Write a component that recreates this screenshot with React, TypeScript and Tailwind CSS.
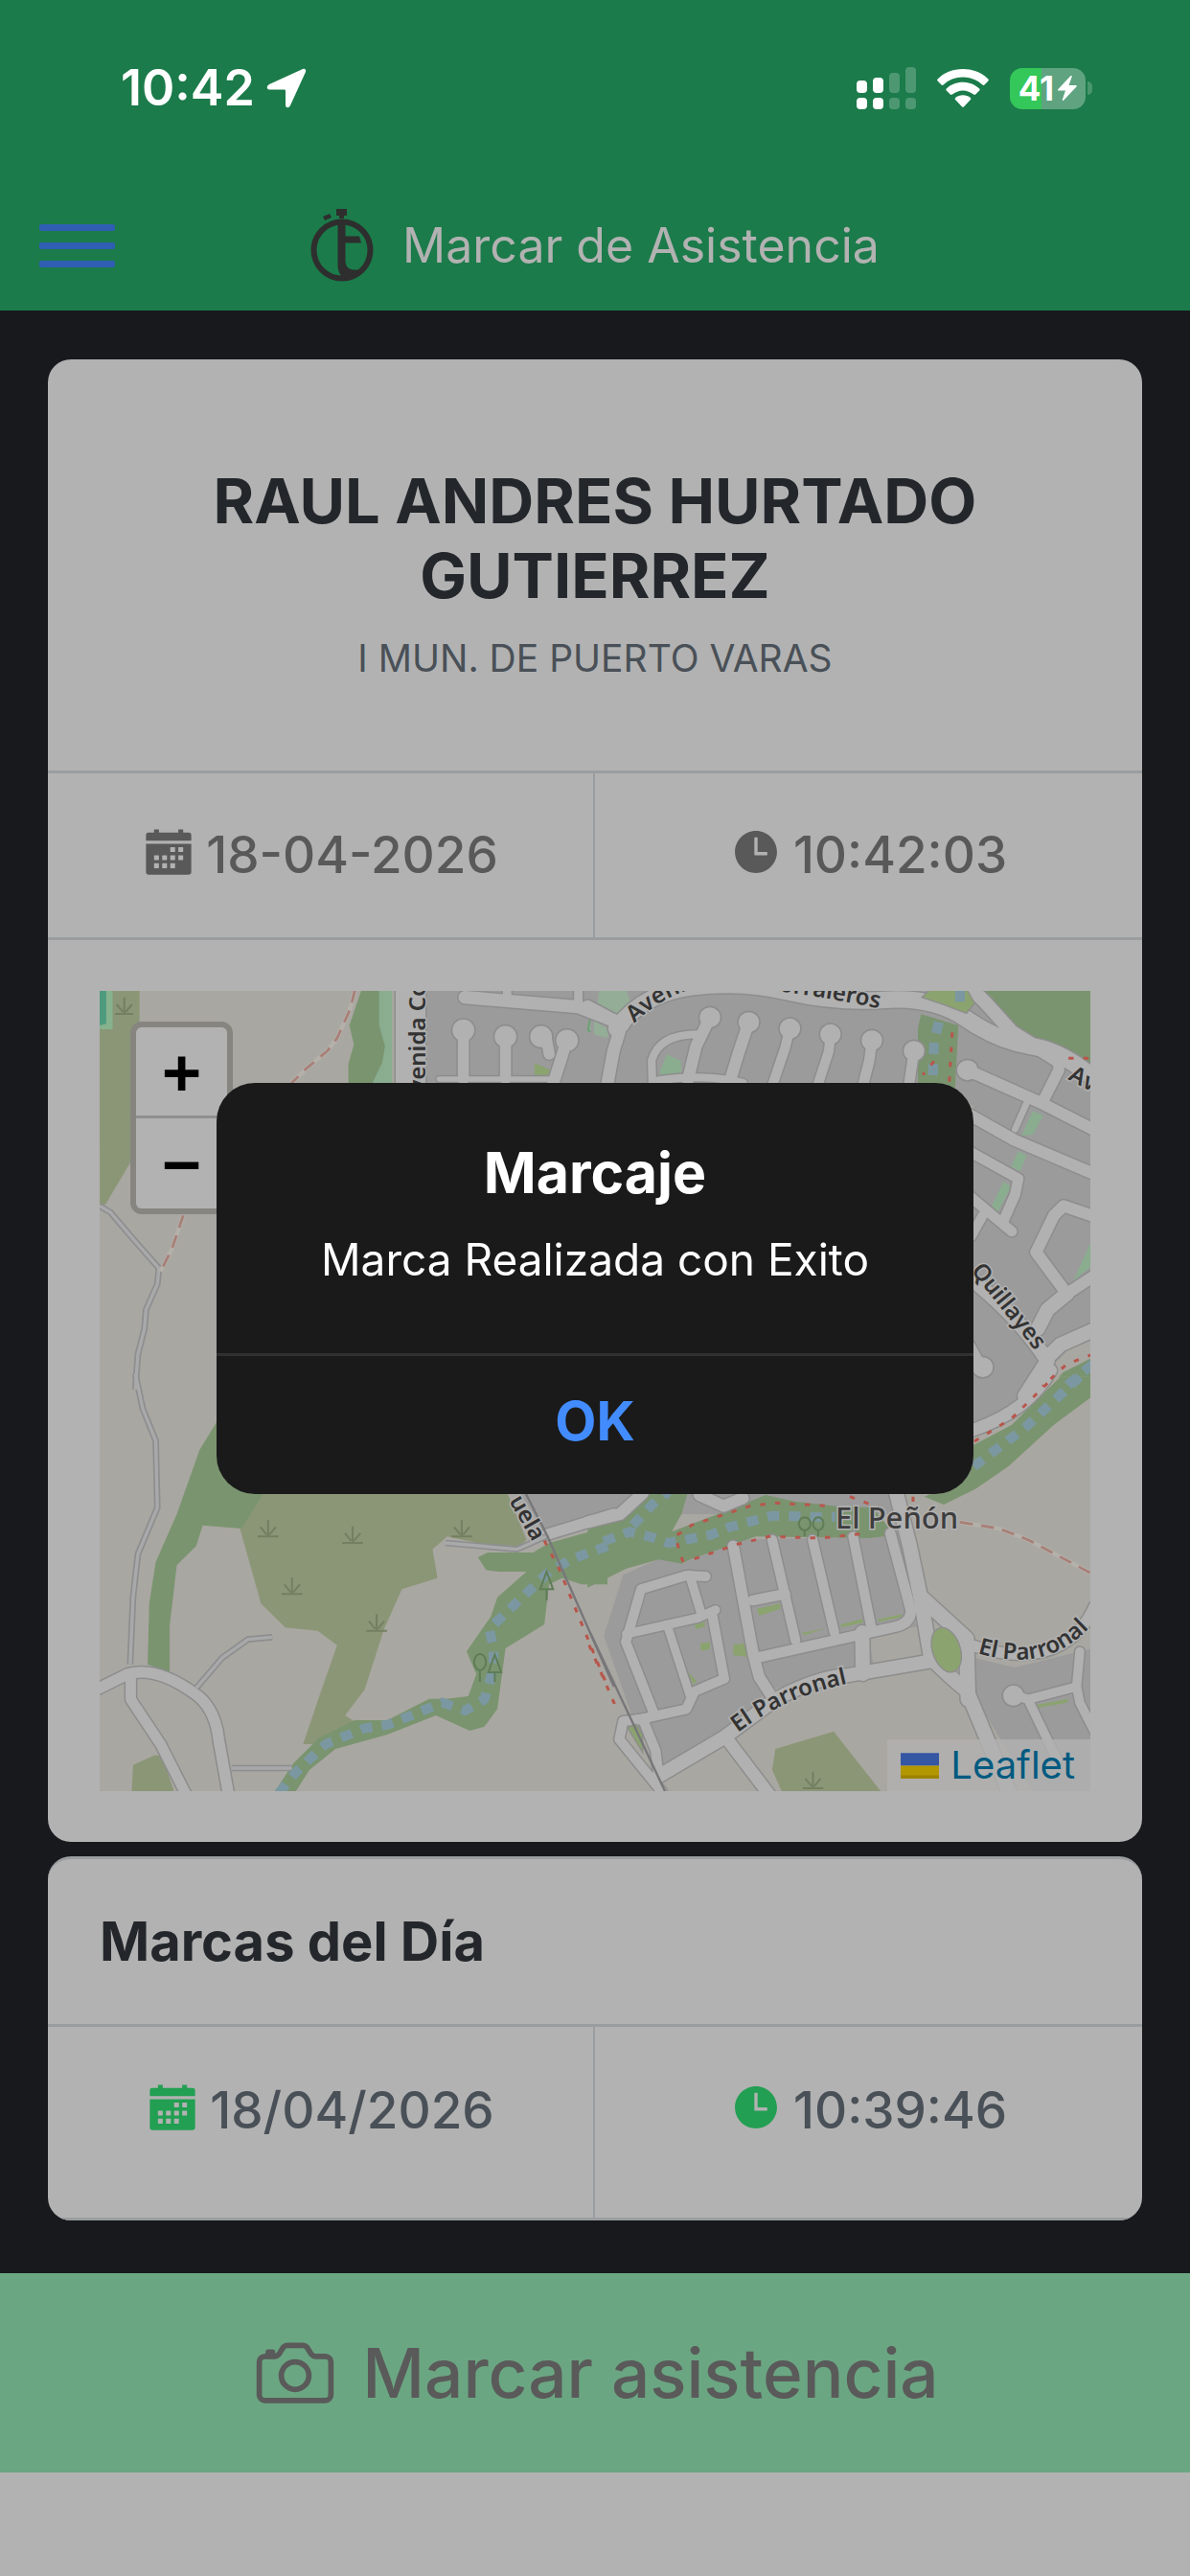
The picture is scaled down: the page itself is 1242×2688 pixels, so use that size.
import React from 'react';
import { IoCalendarSharp, IoCameraOutline, IoTimeSharp } from 'react-icons/io5';

type Road = { d: string; w: number };

// The map is drawn in four quadrants, each with its own local coordinates.
const TL = 'translate(-4 -14) scale(.338 .3333)';
const TR = 'translate(516 -14) scale(.338 .3333)';
const BL = 'translate(-4 406) scale(.338 .3333)';
const BR = 'translate(516 406) scale(.338 .3333)';

const roadsTL: Road[] = [
  { d: 'M972 20V340', w: 92 },
  { d: 'M1140 62L1490 92L1600 135', w: 40 },
  { d: 'M1270 30V70M1490 30V90', w: 26 },
  { d: 'M1135 165V318M1265 185V318M1390 185L1400 240', w: 34 },
  { d: 'M1455 195L1435 260L1410 340', w: 36 },
  { d: 'M1060 318H1400', w: 16 },
];

const roadsTR: Road[] = [
  { d: 'M-20 90L90 150M90 130L60 230L40 340', w: 38 },
  { d: 'M70 160Q150 50 300 30T600 45T900 70T1150 130T1350 215T1560 330', w: 52 },
  { d: 'M1150 20L1210 80L1290 170L1440 265', w: 42 },
  { d: 'M358 125L315 215L290 320M478 140L445 240L415 340', w: 36 },
  { d: 'M605 160L590 220L550 340M730 178L725 230L690 340', w: 30 },
  { d: 'M858 197L850 260L830 340M988 230L972 340', w: 32 },
  { d: 'M180 330L178 260Q200 178 320 178M200 322Q340 300 460 330', w: 24 },
  { d: 'M1153 290L1375 390L1550 480M1160 430L1300 510L1560 622', w: 36 },
  { d: 'M1385 390L1435 290V250', w: 34 },
  { d: 'M1300 475L1335 395', w: 20 },
  { d: 'M1160 545L1310 630L1300 680L1265 760M1160 685L1290 795', w: 32 },
  { d: 'M1550 750L1450 715L1420 745L1365 860L1460 990L1550 930', w: 36 },
  { d: 'M1160 940Q1310 1060 1400 1200L1330 1310M1400 1190L1440 1150L1550 1100M1460 990L1400 1040L1370 1100', w: 44 },
  { d: 'M1200 745L1165 810M1160 1150L1195 1215', w: 30 },
];

const roadsBL: Road[] = [
  { d: 'M-10 975L100 920Q190 895 310 985Q370 1030 380 1130L412 1310', w: 34 },
  { d: 'M108 920V1000L200 1140L285 1310', w: 32 },
  { d: 'M1390 485L1600 420', w: 34 },
];

const roadsBR: Road[] = [
  { d: 'M430 520L492 860L510 930L545 985', w: 34 },
  { d: 'M550 500L622 815M675 500L742 790M800 490L857 780', w: 30 },
  { d: 'M915 480L978 720Q980 765 920 775L500 870M490 690L590 670', w: 32 },
  { d: 'M828 790L830 920', w: 44 },
  { d: 'M200 1240L400 1120L560 1000Q690 930 780 925L1040 880', w: 42 },
  { d: 'M930 340L975 520L1008 680L1040 870Q1120 950 1150 970L1290 1310', w: 44 },
  { d: 'M1010 680L1150 810L1155 1000', w: 46 },
  { d: 'M415 1130L550 1310', w: 38 },
  { d: 'M345 615L285 612L145 655L98 820L185 1045', w: 30 },
  { d: 'M100 795L320 745L375 720M295 610L332 735', w: 28 },
  { d: 'M365 735L402 935L310 975L285 1030L130 1065', w: 30 },
  { d: 'M225 765L295 985', w: 26 },
  { d: 'M150 1060L190 1160L200 1240M140 1062L90 1068L78 1125L210 1290', w: 30 },
  { d: 'M-20 445L80 420L150 355M325 360L400 395L460 370', w: 36 },
  { d: 'M1410 -30Q1340 100 1160 160', w: 38 },
  { d: 'M1150 825Q1330 890 1440 830Q1510 790 1545 710', w: 34 },
  { d: 'M1295 985L1340 1000L1490 960L1500 1010L1560 1130M1340 1000L1430 1190M1490 960L1500 850', w: 28 },
];

const heads = [
  { t: TL, r: 36, at: [[1135, 165], [1265, 185], [1375, 185], [1455, 197]] },
  {
    t: TR,
    r: 34,
    at: [[358, 125], [478, 140], [605, 160], [730, 178], [858, 197], [988, 230], [1153, 290], [1200, 1220]],
  },
  { t: BR, r: 34, at: [[1295, 988]] },
];

const roadGroups = [
  { t: TL, roads: roadsTL },
  { t: TR, roads: roadsTR },
  { t: BL, roads: roadsBL },
  { t: BR, roads: roadsBR },
];

function Roads() {
  return (
    <g fill="none" strokeLinecap="round" strokeLinejoin="round">
      {roadGroups.map(({ t, roads }) => (
        <g key={t} transform={t} stroke="#8d8d8d">
          {roads.map((r) => (
            <path key={r.d} d={r.d} strokeWidth={r.w + 9} />
          ))}
        </g>
      ))}
      {heads.map(({ t, r, at }) => (
        <g key={t} transform={t} fill="#b1b1b1" stroke="#8d8d8d" strokeWidth="5">
          {at.map(([x, y]) => (
            <circle key={x} cx={x} cy={y} r={r} />
          ))}
        </g>
      ))}
      {roadGroups.map(({ t, roads }) => (
        <g key={t} transform={t} stroke="#b1b1b1">
          {roads.map((r) => (
            <path key={r.d} d={r.d} strokeWidth={r.w} />
          ))}
        </g>
      ))}
    </g>
  );
}

function StreetMap() {
  return (
    <svg viewBox="0 0 1034 835" preserveAspectRatio="xMidYMid slice" className="block w-full" role="img" aria-label="Mapa">
      <rect width="1034" height="835" fill="#a9a7a1" />

      {/* land use */}
      <g transform={TL}>
        <path fill="#8b9677" d="M12 40H135V530L30 710L12 715Z" />
        <path fill="#86b28d" d="M12 40H52V162H12Z" />
        <path fill="#4d9a7e" d="M12 40H32V145L12 150Z" />
        <path fill="#8aad90" d="M870 40H915V340H840Z" />
        <path fill="#7a946f" d="M820 40H875V150L893 215L885 265L850 340H780V270L797 210L783 150Z" />
        <path fill="#9b9b9b" d="M925 30H1580V400H925Z" />
        <path fill="#8ba36f" d="M1355 268L1405 290L1385 318H1355ZM1150 306H1240V314H1150Z" />
        <path fill="#94ad96" stroke="#6da077" strokeWidth="6" d="M1525 135L1580 150V195L1520 165ZM1550 40H1580V100H1560Z" />
      </g>
      <g transform={TR}>
        <path fill="#9b9b9b" d="M-10 30H1540V1300H1170V400H-10Z" />
        <path fill="#7a946f" d="M1205 40H1540V290L1450 250L1350 200L1270 130Z" />
        <path fill="#94ad96" d="M15 40H100L115 85L60 122L10 85ZM0 135L50 165L40 190L0 178Z" />
        <path fill="#7a946f" d="M1010 115L1125 150L1115 345H1000V160Z" />
        <path fill="#8aad90" d="M225 240L268 262L270 312L205 315V290ZM1355 418L1387 432L1355 492L1320 495ZM1310 543L1336 558L1315 607L1288 592ZM1265 640L1288 655L1247 732L1225 720ZM1540 815V900L1480 950Z" />
        <path fill="#a9a7a1" d="M1540 1130L1470 1160L1400 1230L1350 1300H1540Z" />
        <path fill="#7a946f" d="M1540 1190L1450 1235L1385 1300H1540Z" />
      </g>
      <g transform={BL}>
        <path
          fill="#8b9677"
          d="M500 340H1265L1330 500L1310 520L1200 515L1085 490L1040 530L1055 620L945 655L890 780L830 970L770 1050L800 1070L700 1140H640L690 990L745 830L685 785L585 775L510 700L445 465ZM115 1205L180 1175H205L245 1300H110Z"
        />
        <path fill="#9b9b9b" d="M1300 340H1580V440L1390 480Z" />
        <path
          fill="#7a946f"
          d="M380 120L320 220L250 420L185 570L165 700L160 890L228 915V770L250 580L310 520L330 455L450 465L520 350ZM1180 555L1210 540H1350L1400 510L1580 460V640H1500L1440 620L1400 640L1385 765L1265 840L1240 1030L1200 1085L1155 1098L1050 1050L900 1110L740 1155L660 1220L610 1300H545L610 1200L690 1120L800 1065H900L1030 998H1080L1150 990L1175 920L1145 850L1220 740L1240 680L1330 600H1245L1205 595Z"
        />
      </g>
      <g transform={BR}>
        <path
          fill="#9b9b9b"
          d="M90 610L200 560L270 575L430 500L900 490L950 700L1000 770V870L860 900L540 970L420 1100L210 1230L120 1060L30 800ZM-20 340H140L90 430L-20 450ZM250 340H950V420H250ZM1175 870L1300 900L1540 840V1300H1360L1180 1000ZM1170 -20H1390L1300 90L1170 150Z"
        />
        <path fill="#a9a7a1" d="M845 810L1000 770L1005 860L865 895ZM1385 -10H1540V20L1400 120Z" />
        <path
          fill="#7a946f"
          d="M-20 465L100 420L180 350H290L270 420L240 475L420 405L530 360L620 380L750 395L860 400L930 485L850 495L500 490L300 560L270 575L200 562L100 590L-20 650ZM1440 -10H1540V50L1420 140L1280 270L1180 340L1080 390L1020 365L1100 330L1160 210L1290 140Z"
        />
        <path fill="#8b9677" d="M560 1155L740 1100L895 1300H585L550 1220Z" />
        <path
          fill="#8ba36f"
          d="M430 828L475 824V866L430 862ZM503 716L575 700V716L510 738ZM640 792L720 776L650 798ZM760 766L830 748V760L765 774ZM875 750L950 733V742L880 757ZM1362 1018L1465 998L1460 1010L1370 1026ZM310 766L342 758V772L315 780ZM328 826L358 820V842L330 848ZM290 912L318 945L305 952Z"
        />
      </g>

      <Roads />

      {/* parks that sit inside the roads */}
      <g fill="#8ba36f" stroke="#8d8d8d" strokeWidth="4">
        <path transform={TR} d="M1012 62L1040 35H1150L1175 80L1150 112L1080 85Z" />
        <ellipse transform={`${BR} rotate(-18 1088 845)`} cx="1088" cy="845" rx="43" ry="72" />
        <path transform={BR} d="M103 1088L130 1078L150 1110V1165Z" />
      </g>

      {/* unpaved tracks */}
      <g fill="none" stroke="#8d8e90" strokeWidth="20" strokeLinejoin="round">
        <path transform={TL} d="M12 715L45 735L125 830L195 910L190 960L155 1040L150 1100L130 1180L122 1290" />
        <path transform={BL} d="M122 -20L145 90L185 190L190 400L130 545L115 680L106 890M310 965L390 870L470 812L545 805M420 1215H605M1080 510L1300 530L1390 490" />
      </g>
      <g fill="none" stroke="#a9a9aa" strokeWidth="10" strokeLinejoin="round">
        <path transform={TL} d="M12 715L45 735L125 830L195 910L190 960L155 1040L150 1100L130 1180L122 1290" />
        <path transform={BL} d="M122 -20L145 90L185 190L190 400L130 545L115 680L106 890M310 965L390 870L470 812L545 805M420 1215H605M1080 510L1300 530L1390 490" />
      </g>

      {/* streams */}
      <g fill="none" stroke="#7b98a2" strokeWidth="30" strokeDasharray="36 30">
        <path transform={TR} d="M1130 40V90M1065 140L1050 200L1045 345M1540 1210L1470 1270L1440 1300" />
        <path transform={BL} d="M1580 520L1470 560L1400 600L1260 735L1215 780L1228 840V900L1200 1000L1140 1035L1070 1010L1010 1035L900 1080L830 1090L710 1140L620 1225L560 1300" />
        <path transform={BR} d="M30 505L110 475L170 490L230 510L360 485L420 460L550 425L680 428H745M120 455L180 390L230 350M1500 -10L1330 150L1160 280" />
      </g>

      {/* foot paths */}
      <g fill="none" stroke="#b4b0aa" strokeWidth="13">
        <path transform={TL} d="M800 40L785 100L745 190L715 230L650 285L600 335M270 745L235 850L200 920" />
        <path transform={BR} d="M1130 445L1250 465L1340 500L1540 608" />
      </g>
      <g fill="none" stroke="#a87f77" strokeWidth="8" strokeDasharray="40 26">
        <path transform={TL} d="M800 40L785 100L745 190L715 230L650 285L600 335M270 745L235 850L200 920" />
        <path transform={BR} d="M1130 445L1250 465L1340 500L1540 608" />
      </g>
      <g fill="none" stroke="#b8564c" strokeWidth="9" strokeDasharray="16 30">
        <path transform={TR} d="M1106 172L1096 345M1050 262L1015 305M1465 253H1540M1540 1180L1460 1210L1385 1280" />
        <path transform={BL} d="M1385 503L1430 590L1580 960" />
        <path transform={BR} d="M275 570L250 490L300 455L480 395L560 385L740 395M790 365L880 400M310 560L440 515L540 490L700 495L840 480M1400 10L1350 60L1290 120L1170 195M-15 830L70 1030M985 365V400" />
      </g>

      {/* railway */}
      <g fill="none" stroke="#77777a" strokeWidth="7">
        <path transform={BL} d="M1325 350L1395 490L1600 960" />
        <path transform={BR} d="M-10 795L225 1300" />
      </g>

      {/* vegetation marks */}
      <g fill="none" stroke="#747f62" strokeWidth="6">
        {[[532, 490], [793, 510], [606, 670], [867, 785], [1130, 490]].map(([x, y]) => (
          <path key={x} transform={BL} d={`M${x - 32} ${y}H${x + 32}M${x} ${y}V${y - 52}M${x - 4} ${y - 6}L${x - 24} ${y - 30}M${x + 4} ${y - 6}L${x + 24} ${y - 30}`} />
        ))}
        <path transform={BR} d="M645 1278H708M676 1278V1226M672 1272L652 1248M680 1272L700 1248" />
        <path transform={TL} d="M60 114H115M88 114V62M84 108L64 84M92 108L112 84" />
        <g stroke="#5f7d57">
          <path transform={BL} d="M1186 945V908M1186 908A18 25 0 1 1 1187 908M1232 945V915H1212L1232 860L1252 915H1232M1392 690V655H1372L1392 600L1412 655H1392" />
          <path transform={BR} d="M650 490V470A18 20 0 1 1 651 470M692 490V470A16 20 0 1 1 693 470" />
        </g>
      </g>

      {/* labels */}
      <g className="font-['Noto_Sans','Open_Sans',sans-serif]" fill="#333" stroke="#b1b1b1" strokeWidth="3" paintOrder="stroke" fontSize="24" fontWeight="600">
        <path id="corraleros" fill="none" stroke="none" d="M558 34Q612 -18 680 -3Q750 4 830 22" />
        <path id="parronal" fill="none" stroke="none" d="M666 774Q720 733 795 720" />
        <path id="parronal-este" fill="none" stroke="none" d="M916 691Q960 704 992 692Q1028 680 1060 630" />
        <text transform="translate(340 122) rotate(-90)">Avenida Co</text>
        <text>
          <textPath href="#corraleros">Avenida Los Corraleros</textPath>
        </text>
        <text>
          <textPath href="#parronal">El Parronal</textPath>
        </text>
        <text>
          <textPath href="#parronal-este">El Parronal</textPath>
        </text>
        <text transform="translate(909 292) rotate(51)">Quillayes</text>
        <text transform="translate(1010 92) rotate(28)">Avenida</text>
        <text transform="translate(427 532) rotate(60)">uela</text>
        <text x="768" y="561" fontSize="31" fontWeight="500" fill="#3d3d3d">
          El Peñón
        </text>
      </g>
    </svg>
  );
}

function StatusBar() {
  return (
    <div className="flex items-center justify-between pt-[70px] pr-[102px] pl-[126px] text-white">
      <div className="flex h-11 items-center gap-3">
        <span className="text-[52px] font-semibold">10:42</span>
        <svg viewBox="0 0 42 42" className="h-[42px] w-[42px]" fill="currentColor">
          <path d="M38 1L3 17C0 18.500 0 22 3 22.500H18.500C19.500 22.500 20 23 20 24V39C20.500 42 23.500 42 25 39L41 4C42 2 40 0 38 1Z" />
        </svg>
      </div>
      <div className="flex h-11 items-center gap-[22px]">
        <svg viewBox="0 0 62 44" className="h-11 w-[62px]" fill="currentColor">
          <rect x="0" y="14" width="11" height="13" rx="4" />
          <rect x="17" y="11" width="11" height="16" rx="4" />
          <g opacity=".22">
            <rect x="34" y="6" width="11" height="21" rx="4" />
            <rect x="51" y="0" width="11" height="27" rx="4" />
            <rect x="34" y="32" width="11" height="12" rx="4" />
            <rect x="51" y="32" width="11" height="12" rx="4" />
          </g>
          <rect x="0" y="32" width="11" height="12" rx="4" />
          <rect x="17" y="32" width="11" height="12" rx="4" />
        </svg>
        <svg viewBox="0 0 54 40" className="h-10 w-[54px]" fill="currentColor">
          <path d="M27 0C16.500 0 7 4 .6 10.500C0 11 0 12 .6 12.600L4.500 16.600C5 17.200 6 17.200 6.600 16.600C12 11.500 19 8.600 27 8.600S42 11.500 47.400 16.600C48 17.200 49 17.200 49.500 16.600L53.400 12.600C54 12 54 11 53.400 10.500C47 4 37.500 0 27 0Z" />
          <path d="M27 13.800C20.500 13.800 14.300 16.200 9.800 20.500C9.200 21 9.200 22 9.800 22.600L13.800 26.600C14.400 27.200 15.200 27.200 15.900 26.600C19 24 22.800 22.400 27 22.400S35 24 38.100 26.600C38.800 27.200 39.600 27.200 40.200 26.600L44.200 22.600C44.800 22 44.800 21 44.200 20.500C39.700 16.200 33.500 13.800 27 13.800Z" />
          <path d="M27 27.300C24 27.300 21.300 28.300 19.200 30C18.500 30.600 18.500 31.500 19.100 32.100L25.900 39.200C26.500 39.900 27.500 39.900 28.100 39.200L34.900 32.100C35.500 31.500 35.500 30.600 34.800 30C32.700 28.300 30 27.300 27 27.300Z" />
        </svg>
        <div className="flex items-center gap-[2px]">
          <div className="flex h-[43px] w-[79px] items-center justify-center gap-1 rounded-[13px] bg-[linear-gradient(90deg,#34c759_42%,#5fa380_42%)]">
            <span className="text-[35px] font-bold">41</span>
            <svg viewBox="0 0 20 26" className="h-[26px] w-5" fill="currentColor">
              <path d="M13.500 0L0 14.500C-.3 15 0 15.500 .5 15.500H8L4.800 25C4.700 26 5.500 26.300 6 25.700L19.700 11.200C20 10.700 19.800 10 19.200 10H11.600L14.700 1C15 0 14.200-.5 13.500 0Z" />
            </svg>
          </div>
          <div className="h-[14px] w-[5px] rounded-r-full bg-[#49966d]" />
        </div>
      </div>
    </div>
  );
}

function StopwatchLogo() {
  return (
    <svg viewBox="0 0 66 76" className="h-[76px] w-[66px]" fill="#2e2e2e">
      <circle cx="33" cy="43" r="29.500" fill="none" stroke="#2e2e2e" strokeWidth="6" />
      <path d="M27 0H38V7H35V10H30V7H27Z" />
      <path d="M13 8L20 5L22 9L15 12Z" />
      <path d="M28.500 12H36.500V28.500H51L53 35.500H36.500V54C36.500 60 40 63.500 45 63.500H53L40 73L33 70.500C30 68 28.500 64 28.500 58Z" />
    </svg>
  );
}

function Header() {
  return (
    <header className="bg-[#1b7b4a]">
      <StatusBar />
      <div className="mt-[74px] grid h-[136px] grid-cols-[1fr_auto_1fr] items-center">
        <button type="button" aria-label="Abrir menú" className="ml-[41px] flex w-[79px] flex-col gap-3">
          <span className="h-[7px] w-full rounded-[2px] bg-[#2f5eb2]" />
          <span className="h-[7px] w-full rounded-[2px] bg-[#2f5eb2]" />
          <span className="h-[7px] w-full rounded-[2px] bg-[#2f5eb2]" />
        </button>
        <div className="flex items-center gap-[30px] text-[#b2b2b2]">
          <StopwatchLogo />
          <h1 className="text-[50px]">Marcar de Asistencia</h1>
        </div>
      </div>
    </header>
  );
}

type DateTimeProps = { date: string; time: string; iconClass: string; className: string };

function DateTimeRow({ date, time, iconClass, className }: DateTimeProps) {
  return (
    <div className={`grid grid-cols-2 border-b-[3px] border-[#999da0] text-[53px] font-medium ${className}`}>
      <div className="flex items-center justify-center gap-3 border-r-2 border-[#999da0]">
        <IoCalendarSharp className={`mb-2 h-[54px] w-[54px] ${iconClass}`} />
        <span>{date}</span>
      </div>
      <div className="flex items-center justify-center gap-3">
        <IoTimeSharp className={`mb-2 h-[54px] w-[54px] ${iconClass}`} />
        <span>{time}</span>
      </div>
    </div>
  );
}

function MapView() {
  return (
    <div className="relative mx-[54px] my-[53px] overflow-hidden">
      <StreetMap />
      <div className="absolute top-8 left-8 w-[107px] overflow-hidden rounded-xl border-[6px] border-[#868580] font-['DejaVu_Sans_Mono',monospace] text-[66px] font-bold text-black">
        <button type="button" aria-label="Acercar" className="flex h-[95px] w-full items-center justify-center border-b-[3px] border-[#8f8f8f] bg-[#b2b2b2]">
          +
        </button>
        <button type="button" aria-label="Alejar" className="flex h-[94px] w-full items-center justify-center bg-[#b2b2b2]">
          −
        </button>
      </div>
      <a href="#leaflet" className="absolute right-0 bottom-0 flex h-[54px] items-center gap-3 bg-[#b2b2b2]/80 pr-4 pl-[14px] text-[40px] text-[#005a80]">
        <svg viewBox="0 0 12 8" className="h-[27px] w-10">
          <path fill="#3556a3" d="M0 0h12v4H0z" />
          <path fill="#b39700" d="M0 4h12v4H0z" />
          <path fill="#9c8200" d="M0 7h12v1H0z" />
        </svg>
        Leaflet
      </a>
    </div>
  );
}

function Dialog() {
  return (
    <div className="fixed inset-0 flex items-center justify-center">
      <div role="alertdialog" aria-labelledby="dialog-title" className="w-[790px] overflow-hidden rounded-[40px] bg-[#1a1a1a] text-center text-white">
        <div className="px-12 pt-14 pb-[68px]">
          <h2 id="dialog-title" className="text-[59px] leading-[76px] font-bold">
            Marcaje
          </h2>
          <p className="mt-[22px] text-[46px] leading-[60px]">Marca Realizada con Exito</p>
        </div>
        <button type="button" className="h-[147px] w-full border-t-[3px] border-[#303030] pb-2 text-[56px] font-bold text-[#428cff]">
          OK
        </button>
      </div>
    </div>
  );
}

export default function App() {
  return (
    <div className="flex min-h-screen flex-col bg-[#b2b2b2] font-['Inter','Liberation_Sans',sans-serif]">
      <Header />

      <main className="flex flex-col gap-[15px] bg-[#17191d] px-[50px] pt-[51px] pb-[55px]">
        <section className="overflow-hidden rounded-3xl bg-[#b2b2b2]">
          <div className="border-b-[3px] border-[#999da0] px-[54px] pt-[109px] pb-[87px] text-center">
            <h2 className="mx-auto max-w-[900px] text-[65px] leading-[78px] font-bold text-[#23272b]">
              RAUL ANDRES HURTADO GUTIERREZ
            </h2>
            <p className="mt-[17px] text-[39px] leading-[60px] text-[#495057]">I MUN. DE PUERTO VARAS</p>
          </div>
          <DateTimeRow date="18-04-2026" time="10:42:03" iconClass="text-[#595959]" className="h-[174px] text-[#595959]" />
          <MapView />
        </section>

        <section className="overflow-hidden rounded-3xl border-t-[3px] border-[#999da0] bg-[#b2b2b2]">
          <h3 className="border-b-[3px] border-[#999da0] px-[54px] text-[56px] leading-[172px] font-bold text-[#23272b]">
            Marcas del Día
          </h3>
          <DateTimeRow date="18/04/2026" time="10:39:46" iconClass="text-[#229f52]" className="h-[202px] text-[#495057] [&>div]:pb-6" />
        </section>
      </main>

      <button type="button" className="flex h-[208px] items-center justify-center gap-6 bg-[#6ba682] text-[71px] font-medium text-[#5a5a5a]">
        <IoCameraOutline className="h-[92px] w-[92px]" />
        Marcar asistencia
      </button>

      <Dialog />
    </div>
  );
}
